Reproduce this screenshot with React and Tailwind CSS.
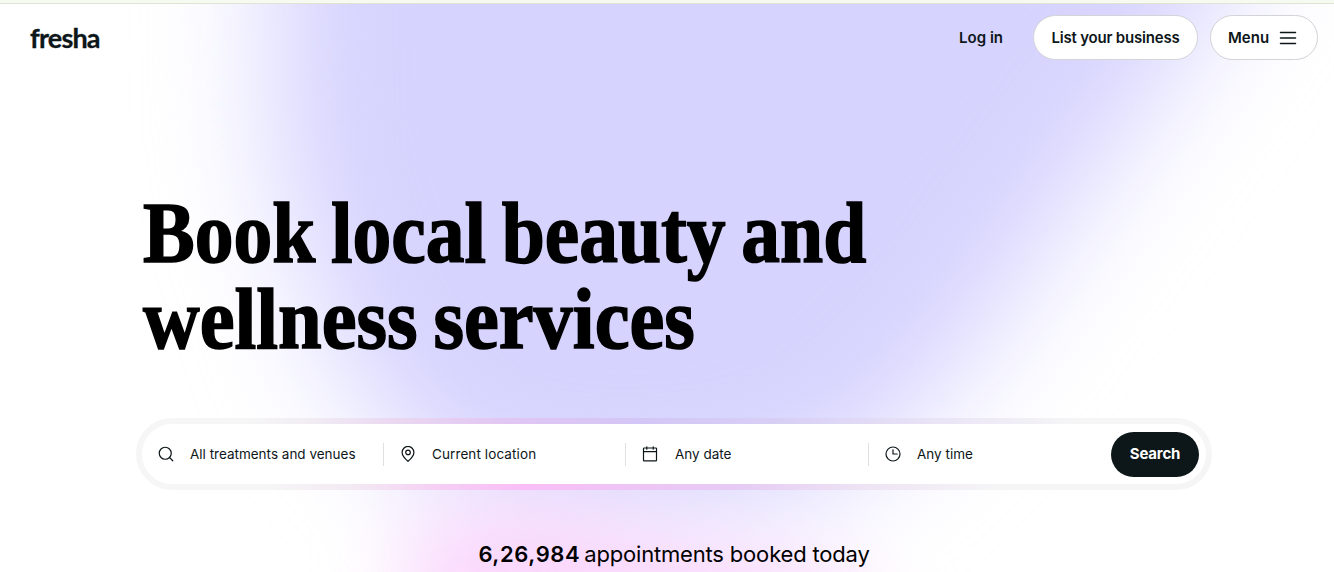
import { Search } from 'lucide-react'

function PinIcon() {
  return (
    <svg viewBox="0 0 16 16" className="w-4 h-4" fill="none" stroke="currentColor" strokeWidth="1.2" strokeLinejoin="round">
      <path d="M8 15.3C5.6 13.2 2.1 10 2.1 6.4a5.9 5.9 0 0 1 11.8 0C13.9 10 10.4 13.2 8 15.3Z" />
      <circle cx="8" cy="6.4" r="2.3" />
    </svg>
  )
}

function CalendarIcon() {
  return (
    <svg viewBox="0 0 16 16" className="w-4 h-4 -ml-px" fill="none" stroke="currentColor" strokeWidth="1.2" strokeLinejoin="round" strokeLinecap="round">
      <rect x="1.5" y="2" width="13" height="12.8" rx="0.6" />
      <path d="M1.5 5.6H14.5M4.8 0.8V3.2M11.2 0.8V3.2" />
    </svg>
  )
}

function ClockIcon() {
  return (
    <svg viewBox="0 0 16 16" className="w-4 h-4" fill="none" stroke="currentColor" strokeWidth="1.2" strokeLinecap="round">
      <circle cx="8" cy="8" r="7" />
      <path d="M8 3.8V8H12.2" />
    </svg>
  )
}

const fields = [
  { label: 'All treatments and venues', icon: <Search className="w-[18px] h-[18px] -ml-px" strokeWidth={1.6} />, box: 'w-[225px]' },
  { label: 'Current location', icon: <PinIcon />, box: 'w-[242px] border-l border-[#e0e0e3] pl-4 tracking-[0.1px]' },
  { label: 'Any date', icon: <CalendarIcon />, box: 'w-[243px] border-l border-[#e0e0e3] pl-[17px]' },
  { label: 'Any time', icon: <ClockIcon />, box: 'w-[243px] border-l border-[#e0e0e3] pl-4' },
]

function Backdrop() {
  return (
    <svg className="absolute inset-0 -z-10" width="1334" height="572" viewBox="0 0 1334 572">
      <defs>
        <filter id="soft" x="-30%" y="-30%" width="160%" height="160%" colorInterpolationFilters="sRGB">
          <feGaussianBlur stdDeviation="60" />
        </filter>
        <filter id="pinkSoft" x="-60%" y="-60%" width="220%" height="220%" colorInterpolationFilters="sRGB">
          <feGaussianBlur stdDeviation="42" />
        </filter>
      </defs>
      <rect width="1334" height="572" fill="#fff" />
      <path d="M268 -250L1370 -250L1180 60L1050 240L975 350L870 460L750 510L560 520L430 480L330 350L274 160Z" fill="#d6d3fe" filter="url(#soft)" />
      <path d="M410 525L540 505L660 540L850 580L900 720L410 720Z" fill="#fad5fc" filter="url(#pinkSoft)" />
    </svg>
  )
}

export default function App() {
  return (
    <div className="relative isolate w-[1334px] h-[572px] overflow-hidden font-['Inter',sans-serif] text-[#0d1619]">
      <Backdrop />

      <div className="h-1 bg-[#f7faf0] border-b border-[#dfe3d3]" />

      <header className="flex items-center justify-between h-[67px] pl-[30px] pr-4">
        <div className="font-['Lato',sans-serif] font-bold text-[27px] leading-none tracking-[-0.8px] [-webkit-text-stroke:0.3px_#0d1619]">fresha</div>
        <nav className="flex items-center text-[15px] font-semibold">
          <a className="mr-[30px] pt-0.5">Log in</a>
          <button className="h-[45px] w-[165px] mr-3 pt-0.5 rounded-full bg-white border border-[#d3d3d8] tracking-[-0.2px] whitespace-nowrap">List your business</button>
          <button className="flex items-center gap-2.5 h-[45px] w-[108px] pl-[17px] rounded-full bg-white border border-[#d3d3d8]">
            <span className="pt-0.5">Menu</span>
            <svg width="18" height="16" viewBox="0 0 18 16" stroke="currentColor" strokeWidth="1.5" strokeLinecap="round">
              <path d="M1.5 2.5H16.5M1.5 8H16.5M1.5 13.5H16.5" />
            </svg>
          </button>
        </nav>
      </header>

      <main className="pt-[119px]">
        <h1 className="ml-[143px] font-['Liberation_Serif',serif] font-bold text-[86px] leading-[86px] text-black whitespace-nowrap [word-spacing:-4px] [-webkit-text-stroke:1.6px_#000]">
          <span className="block w-fit origin-left scale-x-[0.901]">Book local beauty and</span>
          <span className="block w-fit origin-left scale-x-[0.912]">wellness services</span>
        </h1>

        {/* Search bar */}
        <div className="mt-14 ml-[136px] w-[1076px] h-[72px] p-1.5 rounded-full [background:linear-gradient(90deg,#f6f6f6_10%,#f1edf3_16%,#ead8f1_24%,#e2c6f3_34%,#d3c6f6_47%,#d8cff5_60%,#ebe6f6_76%,#f6f6f6_88%)_top/100%_50%_no-repeat,linear-gradient(90deg,#f6f6f6_12%,#f3eaf3_20%,#f5cff4_28%,#f9bdf7_36%,#eec4f5_46%,#e6cbf4_56%,#eee4f4_68%,#f5f5f6_80%)_bottom/100%_50%_no-repeat]">
          <div className="flex items-center h-[60px] rounded-full bg-white pl-4 pr-[7px]">
            {fields.map(f => (
              <div key={f.label} className={`flex items-center h-[23px] text-[13.5px] ${f.box}`}>
                <span className="w-8 flex items-center">{f.icon}</span>
                <span className="whitespace-nowrap">{f.label}</span>
              </div>
            ))}
            <button className="ml-auto h-[45px] w-[88px] rounded-full bg-[#0d1619] text-white font-bold text-[15px] tracking-[-0.2px]">Search</button>
          </div>
        </div>

        <p className="mt-[50px] flex items-baseline justify-center gap-1 text-[22px] leading-7 text-black whitespace-nowrap pl-[14px]">
          <span className="font-semibold tracking-[0.6px]">6,26,984</span>
          <span className="tracking-[-0.18px]">appointments booked today</span>
        </p>
      </main>
    </div>
  )
}
